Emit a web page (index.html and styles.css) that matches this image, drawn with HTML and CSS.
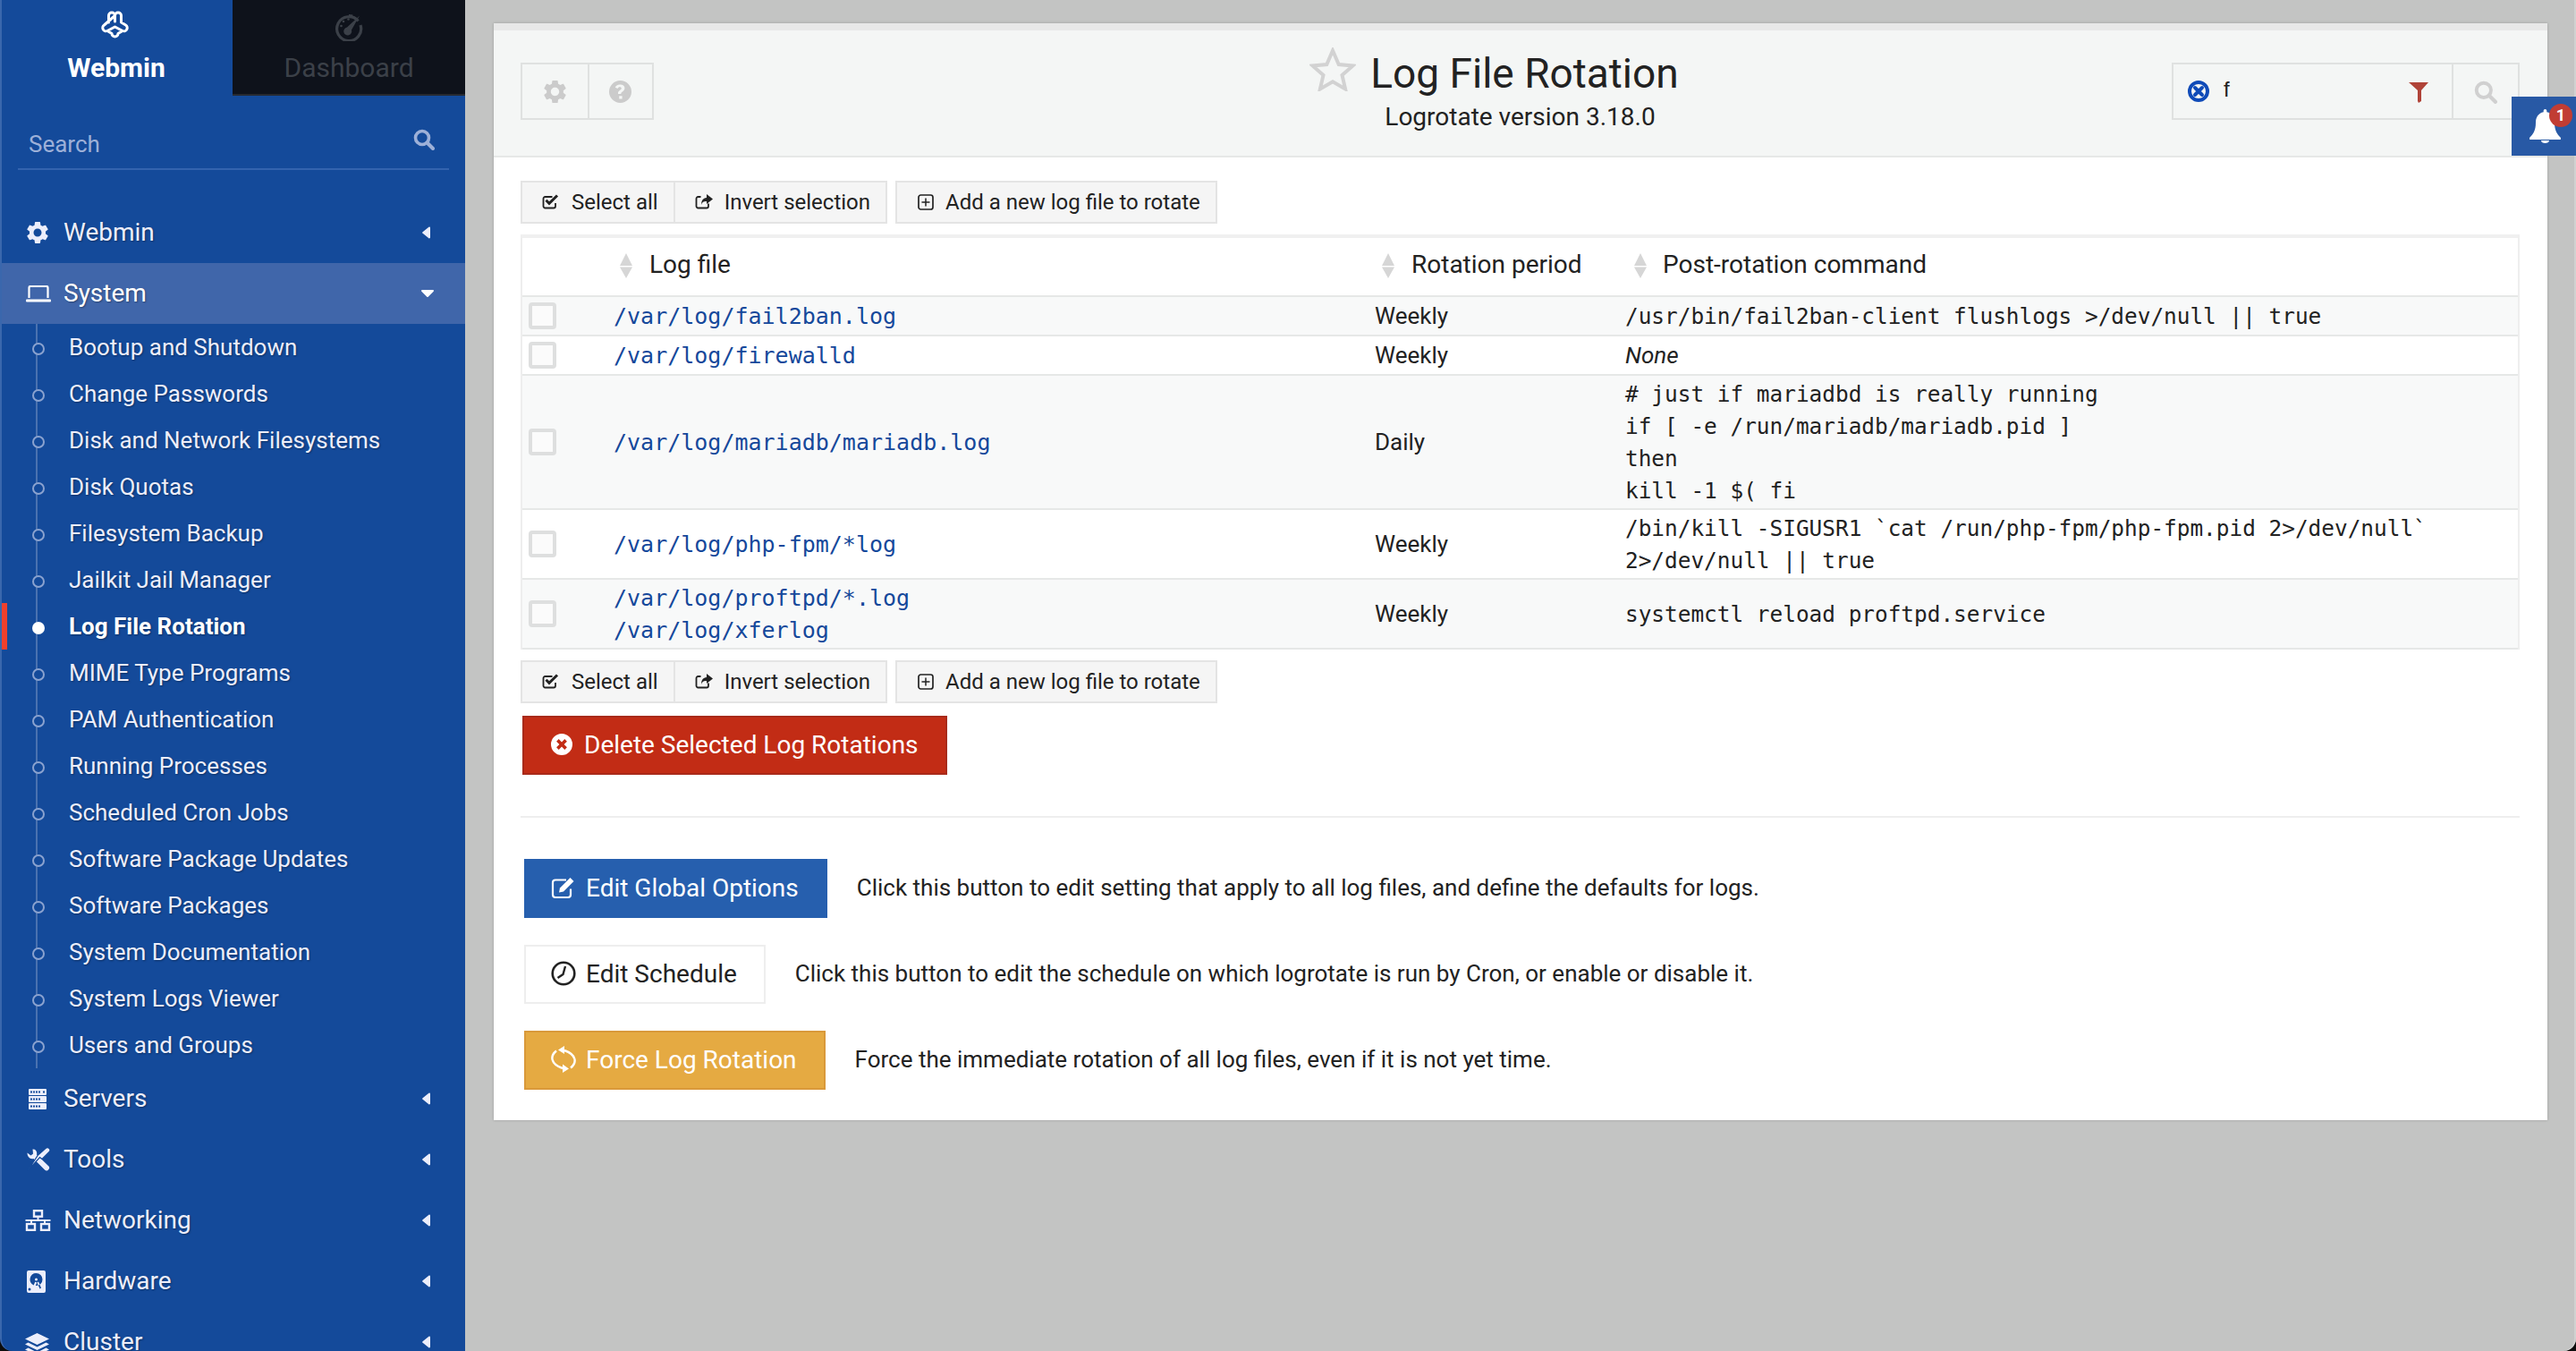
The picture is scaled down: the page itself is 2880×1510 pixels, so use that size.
FILE: index.html
```html
<!DOCTYPE html>
<html lang="en">
<head>
<meta charset="utf-8">
<title>Log File Rotation</title>
<link rel="stylesheet" href="styles.css">
</head>
<body>
<svg class="defs" width="0" height="0" aria-hidden="true">
  <symbol id="i-gear" viewBox="2.4 2.4 19.2 19.2"><path fill-rule="evenodd" d="M19.14,12.94c0.04-0.3,0.06-0.61,0.06-0.94c0-0.32-0.02-0.64-0.07-0.94l2.03-1.58c0.18-0.14,0.23-0.41,0.12-0.61l-1.92-3.32c-0.12-0.22-0.37-0.29-0.59-0.22l-2.39,0.96c-0.5-0.38-1.03-0.7-1.62-0.94L14.4,2.81c-0.04-0.24-0.24-0.41-0.48-0.41h-3.84c-0.24,0-0.43,0.17-0.47,0.41L9.25,5.35C8.66,5.59,8.12,5.92,7.63,6.29L5.24,5.33c-0.22-0.08-0.47,0-0.59,0.22L2.74,8.87C2.62,9.08,2.66,9.34,2.86,9.48l2.03,1.58C4.84,11.36,4.8,11.69,4.8,12s0.02,0.64,0.07,0.94l-2.03,1.58c-0.18,0.14-0.23,0.41-0.12,0.61l1.92,3.32c0.12,0.22,0.37,0.29,0.59,0.22l2.39-0.96c0.5,0.38,1.03,0.7,1.62,0.94l0.36,2.54c0.05,0.24,0.24,0.41,0.48,0.41h3.84c0.24,0,0.44-0.17,0.47-0.41l0.36-2.54c0.59-0.24,1.13-0.56,1.62-0.94l2.39,0.96c0.22,0.08,0.47,0,0.59-0.22l1.92-3.32c0.12-0.22,0.07-0.47-0.12-0.61L19.14,12.94z M12,15.6c-1.98,0-3.6-1.62-3.6-3.6s1.62-3.6,3.6-3.6s3.6,1.62,3.6,3.6S13.98,15.6,12,15.6z"/></symbol>
  <symbol id="i-search" viewBox="0 0 24 24"><circle cx="10" cy="10" r="7.5" fill="none" stroke="currentColor" stroke-width="3.6"/><path d="M15.5 15.5L22 22" stroke="currentColor" stroke-width="4" stroke-linecap="round"/></symbol>
  <symbol id="i-left" viewBox="0 0 9 14"><path d="M8 .5a1 1 0 0 1 1 1v11a1 1 0 0 1-1.6.7L.6 7.8a1 1 0 0 1 0-1.6L7.4.8A1 1 0 0 1 8 .5z"/></symbol>
  <symbol id="i-sort" viewBox="0 0 14 28"><path d="M7 0l7 14H0zM0 15.500h14L7 28z"/></symbol>
  <symbol id="i-check" viewBox="0 0 20 17"><path d="M15 10v3.500a2 2 0 0 1-2 2H3.500a2 2 0 0 1-2-2V5a2 2 0 0 1 2-2h8" fill="none" stroke="currentColor" stroke-width="1.800"/><path d="M4.500 6.800l3.500 3.500L17 1.500" fill="none" stroke="currentColor" stroke-width="3"/></symbol>
  <symbol id="i-share" viewBox="0 0 20 17"><path d="M15 10.500v3a2 2 0 0 1-2 2H3.500a2 2 0 0 1-2-2V5a2 2 0 0 1 2-2h3" fill="none" stroke="currentColor" stroke-width="1.800"/><path d="M13 0l7 5.500-7 5.500V8c-3 0-5 .5-6 4 0-5 2-7.500 6-8z"/></symbol>
  <symbol id="i-plus" viewBox="0 0 18 18"><rect x="1" y="1" width="16" height="16" rx="2.500" fill="none" stroke="currentColor" stroke-width="1.700"/><path d="M9 4.500v9M4.500 9h9" stroke="currentColor" stroke-width="1.500"/></symbol>
  <symbol id="i-xcircle" viewBox="0 0 24 24"><path fill-rule="evenodd" d="M12 0a12 12 0 1 1 0 24 12 12 0 0 1 0-24zM8.700 6.100L6.100 8.700 9.400 12l-3.300 3.300 2.600 2.600 3.300-3.300 3.300 3.300 2.600-2.600-3.300-3.300 3.300-3.300-2.600-2.600-3.300 3.300z"/></symbol>
</svg>

<div class="app">
  <aside class="sidebar">
    <div class="tabs">
      <div class="tab tab-on">
        <svg class="logo" viewBox="0 0 34 32"><path d="M10 14V6.500a3.500 3.500 0 0 1 7 0V13M17 6.500a3.500 3.500 0 0 1 7 0V14l5 3a3.700 3.700 0 0 1-3.500 6.500L17 19l-8.500 4.500A3.700 3.700 0 0 1 5 17zM8.500 23.500l5 3a3.500 3.500 0 0 0 7 0l5-3" fill="none" stroke="#fff" stroke-width="3" stroke-linejoin="round" stroke-linecap="round"/></svg>
        <span>Webmin</span>
      </div>
      <div class="tab tab-off">
        <svg class="dash" viewBox="0 0 32 32"><path d="M26.500 9.500A13.500 13.500 0 1 0 29 14M20 4a13 13 0 0 0-4-.5" fill="none" stroke="currentColor" stroke-width="3.200"/><path d="M28 3.500L19 19.500a4.500 4.500 0 1 1-5-3z" fill="currentColor"/><circle cx="7.500" cy="15" r="1.300" fill="currentColor"/><circle cx="10" cy="10" r="1.300" fill="currentColor"/><circle cx="15.500" cy="7.500" r="1.300" fill="currentColor"/></svg>
        <span>Dashboard</span>
      </div>
    </div>
    <div class="side-search">
      <span>Search</span>
      <svg class="side-search-icon"><use href="#i-search"/></svg>
    </div>
    <nav class="menu">
      <div class="cat">
        <svg class="cat-ic gear"><use href="#i-gear"/></svg>
        <span class="cat-label">Webmin</span>
        <svg class="caret"><use href="#i-left"/></svg>
      </div>
      <div class="cat cat-open">
        <svg class="cat-ic laptop" viewBox="0 0 28 19"><path d="M3.500 14V2.500a1.500 1.500 0 0 1 1.500-1.500h18a1.500 1.500 0 0 1 1.500 1.500V14" fill="none" stroke="currentColor" stroke-width="2.200"/><rect x="0" y="15.500" width="28" height="3" rx="1"/></svg>
        <span class="cat-label">System</span>
        <svg class="caret-down" viewBox="0 0 14 8"><path d="M1 0h12a1 1 0 0 1 .7 1.700L7.700 7.700a1 1 0 0 1-1.400 0L.3 1.700A1 1 0 0 1 1 0z"/></svg>
      </div>
      <ul class="sub">
        <li>Bootup and Shutdown</li>
        <li>Change Passwords</li>
        <li>Disk and Network Filesystems</li>
        <li>Disk Quotas</li>
        <li>Filesystem Backup</li>
        <li>Jailkit Jail Manager</li>
        <li class="sub-on">Log File Rotation</li>
        <li>MIME Type Programs</li>
        <li>PAM Authentication</li>
        <li>Running Processes</li>
        <li>Scheduled Cron Jobs</li>
        <li>Software Package Updates</li>
        <li>Software Packages</li>
        <li>System Documentation</li>
        <li>System Logs Viewer</li>
        <li>Users and Groups</li>
      </ul>
      <div class="cat">
        <svg class="cat-ic servers" viewBox="0 0 20 23"><path fill-rule="evenodd" d="M1 0h18a1 1 0 0 1 1 1v5a1 1 0 0 1-1 1H1a1 1 0 0 1-1-1V1a1 1 0 0 1 1-1zM2 2.500v2h2v-2zm3 0v2h2v-2zm3 0v2h2v-2zm3 0v2h2v-2zm5 0v2h2v-2zM1 8h18a1 1 0 0 1 1 1v5a1 1 0 0 1-1 1H1a1 1 0 0 1-1-1V9a1 1 0 0 1 1-1zm1 2.500v2h2v-2zm3 0v2h2v-2zm3 0v2h2v-2zm3 0v2h2v-2zM1 16h18a1 1 0 0 1 1 1v5a1 1 0 0 1-1 1H1a1 1 0 0 1-1-1v-5a1 1 0 0 1 1-1zm1 2.500v2h2v-2zm3 0v2h2v-2zm3 0v2h2v-2zm3 0v2h2v-2z"/></svg>
        <span class="cat-label">Servers</span>
        <svg class="caret"><use href="#i-left"/></svg>
      </div>
      <div class="cat">
        <svg class="cat-ic tools" viewBox="0 0 26 26"><path d="M.5 5.500L4.500 8.500 7 6.500 6.500 1.500C9.500 1 12 4 11 7.500L24 20a3 3 0 0 1-4 4.500L7.500 12C3.500 13 .5 10 .5 5.500z"/><path d="M21 .5a2.800 2.800 0 0 1 4 4L17 12.500 14.500 10.500 1 25.500 12.500 8z" stroke="#144a9a" stroke-width="1.200"/></svg>
        <span class="cat-label">Tools</span>
        <svg class="caret"><use href="#i-left"/></svg>
      </div>
      <div class="cat">
        <svg class="cat-ic net" viewBox="0 0 29 24"><path d="M14.500 8v4M1.500 13V12h26v1M7 12v3M22 12v3" fill="none" stroke="currentColor" stroke-width="2"/><g fill="none" stroke="currentColor" stroke-width="2.400"><rect x="10" y="1.200" width="9" height="6.500"/><rect x="2" y="16" width="9" height="6.800"/><rect x="18" y="16" width="9" height="6.800"/></g></svg>
        <span class="cat-label">Networking</span>
        <svg class="caret"><use href="#i-left"/></svg>
      </div>
      <div class="cat">
        <svg class="cat-ic hdd" viewBox="0 0 21 25"><path fill-rule="evenodd" d="M2 0h17a2 2 0 0 1 2 2v21a2 2 0 0 1-2 2H2a2 2 0 0 1-2-2V2a2 2 0 0 1 2-2zM10.500 3a7 7 0 0 0-2.800 13.400l1.500-3.700 2 .8-1.400 3.500h.7a7 7 0 0 0 0-14zm0 5.500a1.500 1.500 0 1 1 0 3 1.500 1.500 0 0 1 0-3zM3 19.500a1.500 1.500 0 1 0 0 3 1.500 1.500 0 0 0 0-3zM11.500 13.500l3 7 1.500-1-3-7z"/></svg>
        <span class="cat-label">Hardware</span>
        <svg class="caret"><use href="#i-left"/></svg>
      </div>
      <div class="cat">
        <svg class="cat-ic stack" viewBox="0 0 27 27"><path d="M13.500 0L27 6.500 13.500 13 0 6.500zM3.500 10.500l10 5 10-5L27 12.500 13.500 19 0 12.500zM3.500 16.500l10 5 10-5L27 18.500 13.500 25 0 18.500z"/></svg>
        <span class="cat-label">Cluster</span>
        <svg class="caret"><use href="#i-left"/></svg>
      </div>
    </nav>
  </aside>

  <main class="stage">
    <section class="panel">
      <header class="head">
        <div class="head-left">
          <div class="icon-group">
            <span class="icon-btn"><svg class="ic-gear"><use href="#i-gear"/></svg></span>
            <span class="icon-btn"><svg class="ic-help" viewBox="0 0 24 24"><path fill-rule="evenodd" d="M12 0a12 12 0 1 1 0 24 12 12 0 0 1 0-24zm-.4 4.200c-2.800 0-4.400 1.300-5.100 3.300l2.700 1.100c.4-1.100 1.100-1.700 2.200-1.700 1.200 0 1.900.6 1.900 1.400 0 .8-.6 1.200-1.600 1.900-1.300.9-2.100 1.700-2.100 3.300v.9h3.200v-.6c0-.8.5-1.200 1.500-1.900 1.300-.9 2.400-1.900 2.400-3.800 0-2.500-2-3.900-4.700-3.900zM10.800 16.500v3.200H14v-3.200z"/></svg></span>
          </div>
        </div>
        <div class="head-mid">
          <h1 class="title"><svg class="star" viewBox="0 0 52 49"><path d="M26 3.500l6.700 15.500 15.800 1.400-12 10.600 3.600 15.500L26 38.300 11.900 46.500l3.600-15.500-12-10.600L19.300 19z" fill="none" stroke="#d2d2d2" stroke-width="4"/></svg>Log File Rotation</h1>
          <p class="subtitle">Logrotate version 3.18.0</p>
        </div>
        <div class="head-right">
          <div class="filter">
            <span class="filter-box">
              <svg class="clear" viewBox="0 0 24 24"><circle cx="12" cy="12" r="10" fill="none" stroke="#0f4bb8" stroke-width="4"/><path d="M8 8l8 8M16 8l-8 8" stroke="#0f4bb8" stroke-width="4" stroke-linecap="round"/></svg>
              <span class="filter-val">f</span>
              <svg class="funnel" viewBox="0 0 22 23"><path d="M0 0h22l-8 9v12l-3 2-1-2V9z" fill="#b04338"/></svg>
            </span>
            <span class="filter-go"><svg class="filter-go-ic"><use href="#i-search"/></svg></span>
          </div>
        </div>
      </header>

      <div class="body">
        <div class="toolbar">
          <div class="btn-group">
            <span class="tbtn"><svg class="ti"><use href="#i-check"/></svg>Select all</span>
            <span class="tbtn"><svg class="ti"><use href="#i-share"/></svg>Invert selection</span>
          </div>
          <span class="tbtn tbtn-solo"><svg class="ti ti-plus"><use href="#i-plus"/></svg>Add a new log file to rotate</span>
        </div>

        <table class="grid">
          <colgroup>
            <col class="col-check"><col class="col-file"><col class="col-period"><col>
          </colgroup>
          <thead>
            <tr>
              <th></th>
              <th class="th-file"><svg class="sort"><use href="#i-sort"/></svg>Log file</th>
              <th class="th-period"><svg class="sort"><use href="#i-sort"/></svg>Rotation period</th>
              <th class="th-cmd"><svg class="sort"><use href="#i-sort"/></svg>Post-rotation command</th>
            </tr>
          </thead>
          <tbody>
            <tr>
              <td><input class="tick" type="checkbox"></td>
              <td class="mono"><a href="#">/var/log/fail2ban.log</a></td>
              <td>Weekly</td>
              <td class="mono cmd">/usr/bin/fail2ban-client flushlogs &gt;/dev/null || true</td>
            </tr>
            <tr>
              <td><input class="tick" type="checkbox"></td>
              <td class="mono"><a href="#">/var/log/firewalld</a></td>
              <td>Weekly</td>
              <td><em>None</em></td>
            </tr>
            <tr>
              <td><input class="tick" type="checkbox"></td>
              <td class="mono"><a href="#">/var/log/mariadb/mariadb.log</a></td>
              <td>Daily</td>
              <td class="mono cmd"># just if mariadbd is really running<br>if [ -e /run/mariadb/mariadb.pid ]<br>then<br>kill -1 $( fi</td>
            </tr>
            <tr>
              <td><input class="tick" type="checkbox"></td>
              <td class="mono"><a href="#">/var/log/php-fpm/*log</a></td>
              <td>Weekly</td>
              <td class="mono cmd">/bin/kill -SIGUSR1 `cat /run/php-fpm/php-fpm.pid 2&gt;/dev/null`<br>2&gt;/dev/null || true</td>
            </tr>
            <tr>
              <td><input class="tick" type="checkbox"></td>
              <td class="mono"><a href="#">/var/log/proftpd/*.log</a><br><a href="#">/var/log/xferlog</a></td>
              <td>Weekly</td>
              <td class="mono cmd">systemctl reload proftpd.service</td>
            </tr>
          </tbody>
        </table>

        <div class="toolbar toolbar-low">
          <div class="btn-group">
            <span class="tbtn"><svg class="ti"><use href="#i-check"/></svg>Select all</span>
            <span class="tbtn"><svg class="ti"><use href="#i-share"/></svg>Invert selection</span>
          </div>
          <span class="tbtn tbtn-solo"><svg class="ti ti-plus"><use href="#i-plus"/></svg>Add a new log file to rotate</span>
        </div>

        <button class="btn btn-red" type="button"><svg class="bi bi-x"><use href="#i-xcircle"/></svg>Delete Selected Log Rotations</button>

        <hr class="rule">

        <div class="actions">
          <div class="action">
            <button class="btn btn-blue" type="button"><svg class="bi" viewBox="0 0 28 25"><path d="M22 14v6.500a3 3 0 0 1-3 3H5a3 3 0 0 1-3-3V7a3 3 0 0 1 3-3h12" fill="none" stroke="#fff" stroke-width="2.200"/><path d="M9 18l1-5 11.500-11.500 4 4L14 17z" fill="#fff"/></svg>Edit Global Options</button>
            <span>Click this button to edit setting that apply to all log files, and define the defaults for logs.</span>
          </div>
          <div class="action">
            <button class="btn btn-white" type="button"><svg class="bi" viewBox="0 0 28 28"><circle cx="14" cy="14" r="12.300" fill="none" stroke="#222" stroke-width="2.600"/><path d="M16 6L13.500 15 7.500 19" fill="none" stroke="#222" stroke-width="2.400"/></svg>Edit Schedule</button>
            <span>Click this button to edit the schedule on which logrotate is run by Cron, or enable or disable it.</span>
          </div>
          <div class="action">
            <button class="btn btn-gold" type="button"><svg class="bi bi-sync" viewBox="0 0 28 30"><path d="M6 5.500C-1 11-1 20 13 25M22 24.500C29 19 29 10 15 5" fill="none" stroke="#fff" stroke-width="2.400"/><path d="M13 20.500L20 25.500 13 30zM15 0L8 4.500 15 9z" fill="#fff"/></svg>Force Log Rotation</button>
            <span>Force the immediate rotation of all log files, even if it is not yet time.</span>
          </div>
        </div>
      </div>
    </section>

    <div class="bell">
      <svg class="bell-ic" viewBox="0 0 35 38"><path d="M17.500 0c1 0 1.800.8 1.800 1.800v1.400C25 4.300 28 9 28 15c0 9 3 13 7 17 .5 1 0 2-1 2H1c-1 0-1.500-1-1-2 4-4 7-8 7-17C7 9 10 4.300 15.700 3.200V1.800c0-1 .8-1.800 1.800-1.800zM13 35h9c0 2-2 3-4.500 3S13 37 13 35z" fill="#fff"/></svg>
      <span class="badge">1</span>
    </div>
  </main>
</div>
</body>
</html>
```

FILE: styles.css
```css
* { box-sizing: border-box; }
html, body { margin: 0; height: 100%; }
body {
  background: #0c0c0c;
  font-family: Roboto, "Liberation Sans", sans-serif;
  font-size: 26px;
  color: #222;
  overflow: hidden;
}
.defs { position: absolute; }
svg { display: block; fill: currentColor; flex: none; }

.app { display: flex; height: 1510px; overflow: hidden; }

/* Sidebar */
.sidebar {
  width: 520px;
  flex: none;
  height: 1510px;
  overflow: hidden;
  background: #144a9a;
  border-left: 2px solid #3a67ad;
  border-bottom-left-radius: 14px;
  color: #eceefb;
}
.tabs { display: flex; height: 107px; margin-left: -2px; }
.tab {
  width: 260px;
  display: flex;
  flex-direction: column;
  align-items: center;
  font-size: 30px;
  line-height: 36px;
}
.tab-on { color: #fff; font-weight: 700; padding-top: 11px; }
.logo { width: 35px; height: 32px; margin: 0 4px 15px 0; }
.tab-off { background: #0e121b; color: #3b4048; border-bottom: 2px solid #262a31; padding-top: 14px; }
.dash { width: 32px; height: 32px; margin-bottom: 12px; }

.side-search {
  height: 83px;
  margin: 0 18px;
  padding: 0 16px 0 12px;
  border-bottom: 2px solid #3363ae;
  display: flex;
  align-items: center;
  justify-content: space-between;
  color: #9db0d8;
}
.side-search span { position: relative; top: 13px; }
.side-search-icon { width: 24px; height: 24px; position: relative; top: 8px; }
.menu { padding-top: 36px; }
.cat {
  height: 68px;
  display: flex;
  align-items: center;
  position: relative;
  margin-left: -2px;
  padding-left: 28px;
  font-size: 28px;
  text-shadow: 1px 1px 2px rgba(0, 0, 0, .35);
}
.cat-open { background: #4066aa; color: #fff; }
.cat-ic { position: absolute; }
.cat-label { margin: 0 0 1px 43px; }
.gear { left: 30px; width: 24px; height: 24px; }
.laptop { left: 29px; width: 28px; height: 19px; }
.servers { left: 32px; width: 20px; height: 23px; }
.tools { left: 30px; width: 26px; height: 26px; }
.net { left: 28px; width: 29px; height: 24px; }
.hdd { left: 30px; width: 21px; height: 25px; }
.stack { left: 28px; width: 27px; height: 27px; top: 24px; }
.caret { position: absolute; left: 472px; width: 9px; height: 14px; }
.caret-down { position: absolute; left: 471px; width: 14px; height: 8px; }

.sub { list-style: none; margin: 0; padding: 0; position: relative; }
.sub::before {
  content: "";
  position: absolute;
  left: 38px;
  top: 0;
  bottom: 0;
  width: 2px;
  background: #4a72b0;
}
.sub li {
  height: 52px;
  line-height: 52px;
  padding-left: 75px;
  position: relative;
  text-shadow: 1px 1px 2px rgba(0, 0, 0, .35);
}
.sub li::before {
  content: "";
  position: absolute;
  left: 34px;
  top: 21px;
  width: 10px;
  height: 10px;
  border-radius: 50%;
  border: 2px solid #8aa2cf;
  background: #144a9a;
}
.sub-on { color: #fff; font-weight: 700; }
.sub .sub-on::before { background: #fff; border-color: #fff; }
.sub .sub-on::after {
  content: "";
  position: absolute;
  left: -2px;
  top: 0;
  width: 8px;
  height: 52px;
  background: #f0402c;
}

/* Stage */
.stage {
  flex: 1;
  position: relative;
  background: #c3c4c3;
  padding: 26px 32px 0;
  border-bottom-right-radius: 14px;
  box-shadow: inset -2px 0 0 #d0d1d0;
}
.panel {
  background: #fff;
  border-top: 8px solid #e8e8e8;
  box-shadow: 0 0 3px rgba(0, 0, 0, .2);
}
.head {
  height: 142px;
  background: #f4f6f5;
  border-bottom: 2px solid #e6e8e7;
  display: grid;
  grid-template-columns: 1fr auto 1fr;
  padding: 36px 31px 0 30px;
}
.icon-group { display: inline-flex; border: 2px solid #dfe1e0; height: 64px; }
.icon-btn {
  width: 72.5px;
  display: flex;
  align-items: center;
  justify-content: center;
  color: #cbcbcb;
}
.icon-btn + .icon-btn { border-left: 2px solid #dfe1e0; }
.ic-gear, .ic-help { width: 25px; height: 25px; }
.head-mid { text-align: center; }
.title {
  position: relative;
  margin: -15px 0 0 10px;
  font-size: 46px;
  line-height: 54px;
  font-weight: 400;
  color: #222;
}
.star { position: absolute; left: -68px; top: -2px; width: 52px; height: 49px; }
.subtitle { margin: 4px 0 0; font-size: 28px; line-height: 36px; color: #222; }
.head-right { display: flex; justify-content: flex-end; }
.filter { display: flex; height: 64px; width: 389px; border: 2px solid #dfe1e0; }
.filter-box {
  width: 313px;
  display: flex;
  align-items: flex-start;
  padding: 18px 26px 0 16px;
  border-right: 2px solid #dfe1e0;
}
.clear { width: 24px; height: 24px; }
.filter-val {
  margin: -1px 0 0 16px;
  font-size: 24px;
  line-height: 22px;
  font-family: "Liberation Sans", sans-serif;
  color: #222;
}
.funnel { width: 22px; height: 23px; margin-left: auto; margin-top: 2px; }
.filter-go { flex: 1; display: flex; justify-content: center; padding-top: 18px; color: #d0d0d0; }
.filter-go-ic { width: 26px; height: 26px; }

/* Body */
.body { padding: 26px 31px 34px 30px; }
.toolbar { display: flex; gap: 9px; height: 48px; font-size: 24px; }
.toolbar-low { margin-top: 12px; }
.btn-group { display: flex; }
.tbtn {
  display: flex;
  align-items: center;
  background: #f5f5f5;
  border: 2px solid #e4e4e4;
  padding: 0 17px 1px 22px;
  color: #222;
  white-space: nowrap;
}
.btn-group .tbtn + .tbtn { border-left: 0; }
.tbtn-solo { padding: 0 17px 1px 23px; }
.ti { width: 20px; height: 17px; margin-right: 13px; }
.ti-plus { width: 18px; height: 18px; margin-right: 13px; }

.grid {
  width: 100%;
  margin-top: 12px;
  border-collapse: separate;
  border-spacing: 0;
  table-layout: fixed;
  border-top: 4px solid #f0f0f0;
  border-left: 2px solid #eeeeee;
  border-right: 2px solid #eeeeee;
}
.col-check { width: 102px; }
.col-file { width: 851px; }
.col-period { width: 280px; }
.grid th {
  height: 66px;
  padding-bottom: 6px;
  font-weight: 400;
  font-size: 28px;
  text-align: left;
  border-bottom: 2px solid #e6e8e7;
  white-space: nowrap;
}
.sort { display: inline-block; width: 14px; height: 28px; color: #d6d6d6; vertical-align: -6px; margin-right: 19px; }
.th-file { padding-left: 7px; }
.th-period { padding-left: 8px; }
.th-cmd { padding-left: 10px; }
.th-cmd .sort { margin-right: 18px; }
.grid td {
  height: 44px;
  padding: 2px 0;
  line-height: 36px;
  font-size: 26px;
  border-bottom: 2px solid #e6e8e7;
  vertical-align: middle;
}
.grid tbody tr:nth-child(odd) td { background: #f8f9f9; }
.grid .mono {
  font-family: "DejaVu Sans Mono", "Liberation Mono", monospace;
  font-size: 25px;
  padding: 3px 0 1px;
}
.grid .cmd { font-size: 24.4px; color: #222; }
.mono a { color: #15489b; text-decoration: none; }
em { font-style: italic; }
.tick {
  appearance: none;
  display: block;
  margin: 0 0 0 7px;
  width: 31px;
  height: 30px;
  border: 4px solid #dedfdf;
  border-radius: 4px;
  background: #fbfbfb;
}

.btn {
  display: flex;
  align-items: center;
  height: 66px;
  font-family: inherit;
  font-size: 28px;
  border: 2px solid;
  padding: 0 30px 2px 28px;
  white-space: nowrap;
}
.bi { width: 28px; height: 28px; margin-right: 11px; }
.bi-sync { height: 30px; }
.btn-red { margin: 14px 0 0 2px; background: #c22c15; border-color: #a82a1a; color: #fff; padding-left: 30px; }
.bi-x { width: 24px; height: 24px; margin-right: 13px; }
.btn-blue { background: #265fae; border-color: #265fae; color: #fff; }
.btn-white { background: #fff; border-color: #eeeeee; color: #222; }
.btn-gold { background: #e5aa42; border-color: #d9993a; color: #fff; }
.rule { border: 0; height: 2px; background: #eeeeee; margin: 46px 0; }
.actions { display: flex; flex-direction: column; gap: 30px; padding-left: 4px; }
.action { display: flex; align-items: center; gap: 33px; }
.action span { padding-bottom: 3px; }

/* Notification */
.bell {
  position: absolute;
  right: 0;
  top: 108px;
  width: 72px;
  height: 66px;
  background: #2859a5;
}
.bell-ic { position: absolute; left: 20px; top: 14px; width: 35px; height: 38px; }
.badge {
  position: absolute;
  left: 42px;
  top: 8px;
  width: 26px;
  height: 26px;
  border-radius: 50%;
  background: #c13d33;
  color: #fff;
  font-size: 18px;
  font-weight: 700;
  line-height: 26px;
  text-align: center;
}
```
